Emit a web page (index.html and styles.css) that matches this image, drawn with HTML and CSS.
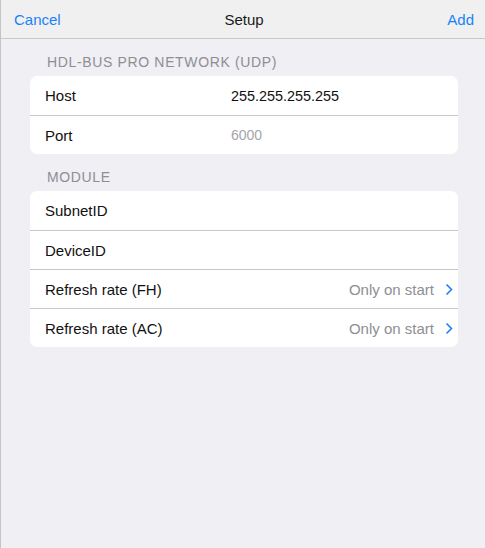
FILE: index.html
```html
<!DOCTYPE html>
<html lang="en">
<head>
  <meta charset="UTF-8">
  <meta name="viewport" content="width=device-width, initial-scale=1.0">
  <title>Setup</title>
  <link rel="stylesheet" href="styles.css">
</head>
<body>
  <div class="app-container">
    <header class="nav-bar">
      <a href="#" class="nav-button">Cancel</a>
      <h1 class="nav-title">Setup</h1>
      <a href="#" class="nav-button nav-right">Add</a>
    </header>

    <div class="content">
      <h2 class="section-header">HDL-BUS PRO NETWORK (UDP)</h2>
      <div class="card">
        <div class="row">
          <span class="row-label">Host</span>
          <span class="row-value">255.255.255.255</span>
        </div>
        <div class="row">
          <span class="row-label">Port</span>
          <span class="row-value placeholder">6000</span>
        </div>
      </div>

      <h2 class="section-header">MODULE</h2>
      <div class="card">
        <div class="row">
          <span class="row-label">SubnetID</span>
        </div>
        <div class="row">
          <span class="row-label">DeviceID</span>
        </div>
        <div class="row row-link">
          <span class="row-label">Refresh rate (FH)</span>
          <span class="row-detail">Only on start</span>
          <svg class="chevron" width="8" height="13" viewBox="0 0 8 13"><path d="M1.5 1.5 L6.5 6.5 L1.5 11.5" fill="none" stroke="#1a82fb" stroke-width="1.6"/></svg>
        </div>
        <div class="row row-link">
          <span class="row-label">Refresh rate (AC)</span>
          <span class="row-detail">Only on start</span>
          <svg class="chevron" width="8" height="13" viewBox="0 0 8 13"><path d="M1.5 1.5 L6.5 6.5 L1.5 11.5" fill="none" stroke="#1a82fb" stroke-width="1.6"/></svg>
        </div>
      </div>
    </div>
  </div>
</body>
</html>
```

FILE: styles.css
```css
:root {
  --blue: #1a82fb;
  --bg: #efeff4;
  --bar-bg: #f0f0f0;
  --text: #111111;
  --text-gray: #8e8e93;
  --separator: #c8c7cc;
}

* {
  margin: 0;
  padding: 0;
  box-sizing: border-box;
  font-family: "Liberation Sans", Arial, sans-serif;
}

body {
  background: var(--bg);
  color: var(--text);
  min-height: 100vh;
}

.app-container {
  height: 548px;
  border-left: 1px solid #c4c4c8;
  display: flex;
  flex-direction: column;
}

.nav-bar {
  height: 39px;
  background: var(--bar-bg);
  border-bottom: 1px solid #c8c8c8;
  display: grid;
  grid-template-columns: 1fr auto 1fr;
  align-items: center;
  padding: 1px 11px 0 13px;
}

.nav-button {
  color: var(--blue);
  text-decoration: none;
  font-size: 15px;
}

.nav-right {
  justify-self: end;
}

.nav-title {
  font-size: 15px;
  font-weight: normal;
  color: #1a1a1a;
}

.content {
  flex: 1;
  padding: 0 27px 0 29px;
}

.section-header {
  font-size: 14px;
  font-weight: normal;
  color: var(--text-gray);
  letter-spacing: 0.65px;
  padding: 15px 0 6px 17px;
  line-height: 16px;
}

.card {
  background: #ffffff;
  border-radius: 7px;
  overflow: hidden;
}

.row {
  height: 39px;
  display: flex;
  align-items: center;
  padding: 0 5px 0 15px;
  font-size: 15px;
}

.row + .row {
  border-top: 1px solid var(--separator);
}

.row-label {
  width: 186px;
}

.row-value {
  font-size: 14.4px;
  color: var(--text);
}

.row-value.placeholder {
  font-size: 14px;
  color: #a5a5a9;
}

.row-detail {
  margin-left: auto;
  color: var(--text-gray);
  font-size: 15px;
  margin-right: 11px;
}

.chevron {
  display: block;
}
```
